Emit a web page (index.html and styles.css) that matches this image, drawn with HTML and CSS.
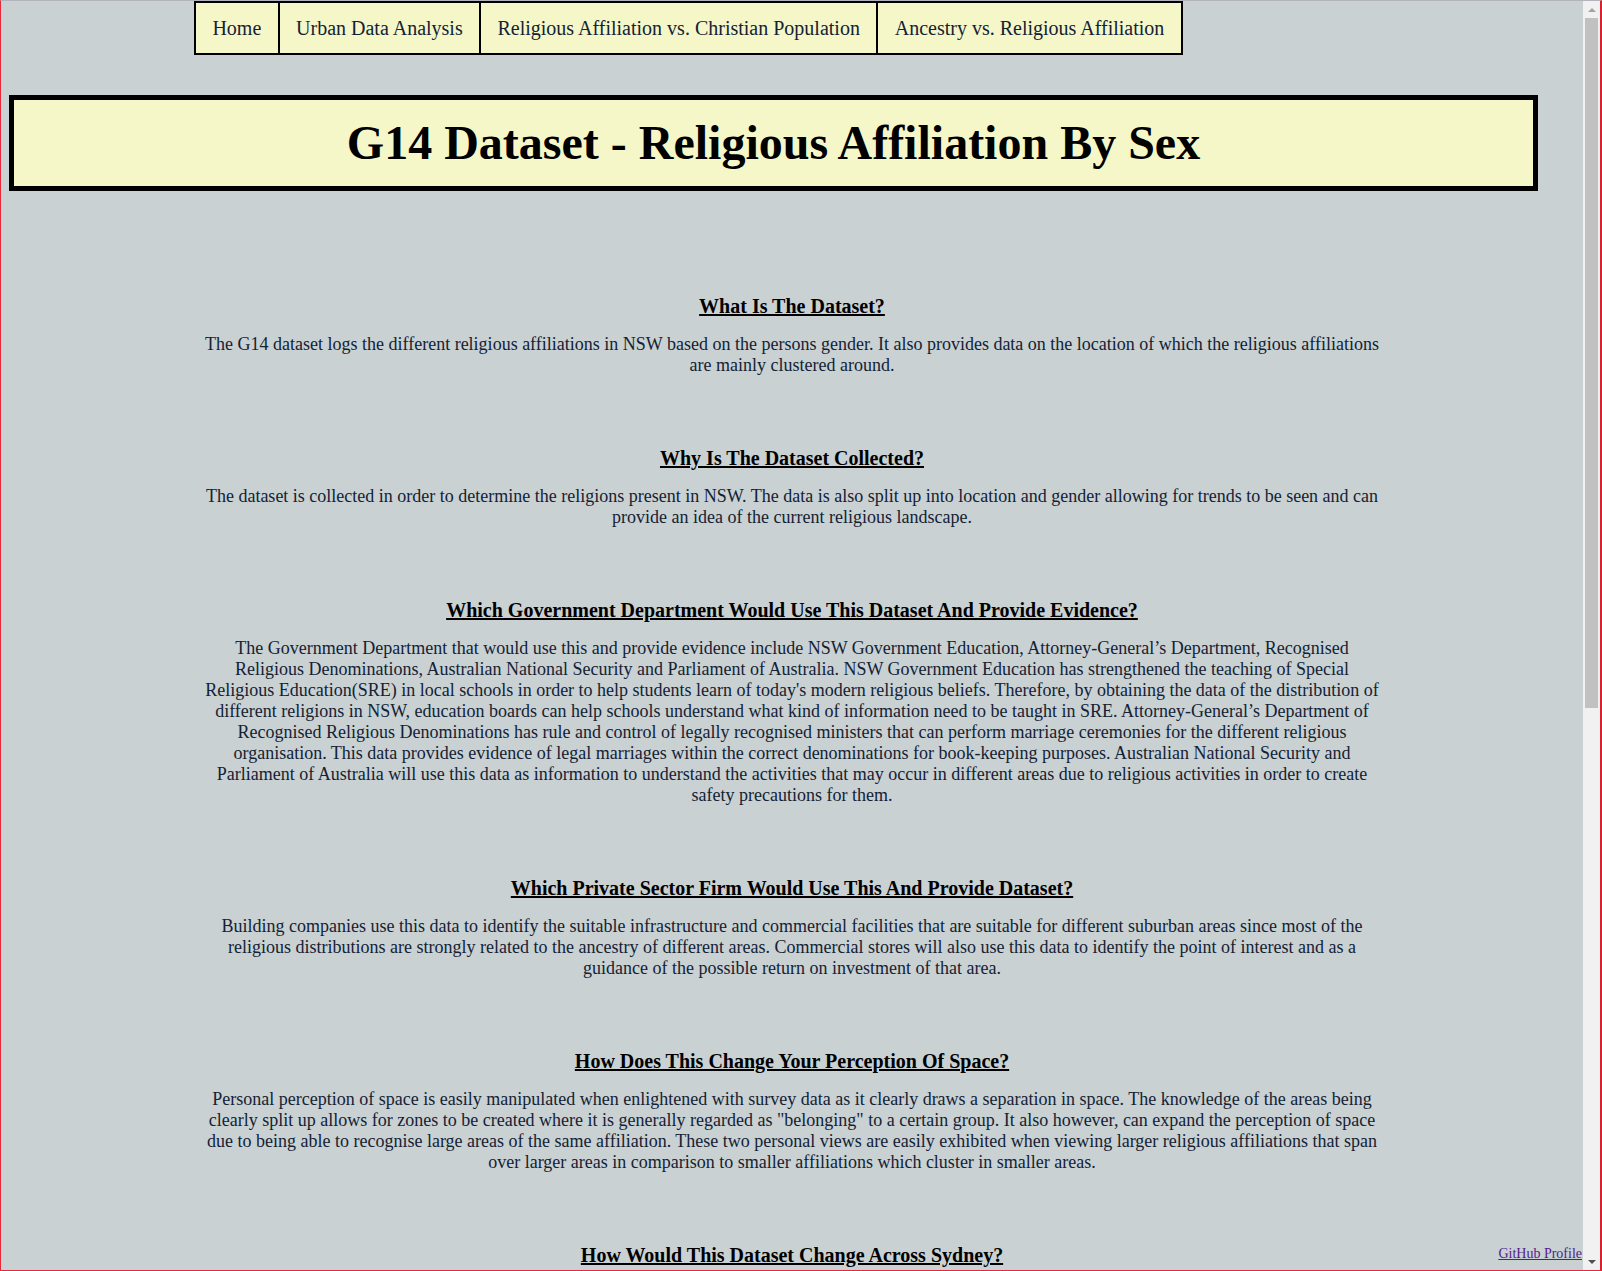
FILE: index.html
```html
<!DOCTYPE html>
<html lang="en">
<head>
<meta charset="utf-8">
<title>G14 Dataset - Religious Affiliation By Sex</title>
<link rel="stylesheet" href="styles.css">
</head>
<body>
<div class="window">
  <div class="viewport">
    <div class="page">
      <nav class="nav">
        <a class="nav-item" href="#">Home</a>
        <a class="nav-item" href="#">Urban Data Analysis</a>
        <a class="nav-item" href="#">Religious Affiliation vs. Christian Population</a>
        <a class="nav-item" href="#">Ancestry vs. Religious Affiliation</a>
      </nav>
      <h1 class="title">G14 Dataset - Religious Affiliation By Sex</h1>
      <main class="content">
        <section class="section">
          <h3 class="heading">What Is The Dataset?</h3>
          <p class="text">The G14 dataset logs the different religious affiliations in NSW based on the persons gender. It also provides data on the location of which the religious affiliations are mainly clustered around.</p>
        </section>
        <section class="section">
          <h3 class="heading">Why Is The Dataset Collected?</h3>
          <p class="text">The dataset is collected in order to determine the religions present in NSW. The data is also split up into location and gender allowing for trends to be seen and can provide an idea of the current religious landscape.</p>
        </section>
        <section class="section">
          <h3 class="heading">Which Government Department Would Use This Dataset And Provide Evidence?</h3>
          <p class="text">The Government Department that would use this and provide evidence include NSW Government Education, Attorney-General’s Department, Recognised Religious Denominations, Australian National Security and Parliament of Australia. NSW Government Education has strengthened the teaching of Special Religious Education(SRE) in local schools in order to help students learn of today's modern religious beliefs. Therefore, by obtaining the data of the distribution of different religions in NSW, education boards can help schools understand what kind of information need to be taught in SRE. Attorney-General’s Department of Recognised Religious Denominations has rule and control of legally recognised ministers that can perform marriage ceremonies for the different religious organisation. This data provides evidence of legal marriages within the correct denominations for book-keeping purposes. Australian National Security and Parliament of Australia will use this data as information to understand the activities that may occur in different areas due to religious activities in order to create safety precautions for them.</p>
        </section>
        <section class="section">
          <h3 class="heading">Which Private Sector Firm Would Use This And Provide Dataset?</h3>
          <p class="text">Building companies use this data to identify the suitable infrastructure and commercial facilities that are suitable for different suburban areas since most of the religious distributions are strongly related to the ancestry of different areas. Commercial stores will also use this data to identify the point of interest and as a guidance of the possible return on investment of that area.</p>
        </section>
        <section class="section">
          <h3 class="heading">How Does This Change Your Perception Of Space?</h3>
          <p class="text">Personal perception of space is easily manipulated when enlightened with survey data as it clearly draws a separation in space. The knowledge of the areas being clearly split up allows for zones to be created where it is generally regarded as "belonging" to a certain group. It also however, can expand the perception of space due to being able to recognise large areas of the same affiliation. These two personal views are easily exhibited when viewing larger religious affiliations that span over larger areas in comparison to smaller affiliations which cluster in smaller areas.</p>
        </section>
        <section class="section">
          <h3 class="heading">How Would This Dataset Change Across Sydney?</h3>
          <p class="text">As Sydney continues to grow, the distribution of religious affiliations across its suburbs will continue to shift.</p>
        </section>
      </main>
      <a class="github" href="#">GitHub Profile</a>
    </div>
    <div class="scrollbar">
      <div class="sb-btn"><span class="arrow-up"></span></div>
      <div class="sb-track"><div class="sb-thumb"></div></div>
      <div class="sb-btn sb-btn-bottom"><span class="arrow-down"></span></div>
    </div>
  </div>
</div>
</body>
</html>
```

FILE: styles.css
```css
html, body {
  margin: 0;
  padding: 0;
  overflow: hidden;
}

.window {
  box-sizing: border-box;
  width: 1602px;
  height: 1271px;
  border-top: 1px solid #b3b3bb;
  border-left: 1px solid #e8283a;
  border-right: 2px solid #d8202e;
  border-bottom: 1px solid #e8283a;
  display: flex;
  flex-direction: column;
}

.viewport {
  flex: 1;
  display: flex;
  flex-direction: row;
  min-height: 0;
}

.page {
  flex: 1;
  position: relative;
  overflow: hidden;
  background: #c9d1d3;
  padding: 0 8px;
  font-family: "Liberation Serif", "Times New Roman", serif;
  color: #142233;
}

.nav {
  display: flex;
  margin: 0 0 0 185px;
  width: max-content;
  border: 2px solid #000;
  background: #f5f7c9;
}

.nav-item {
  display: block;
  padding: 13px 16.4px;
  font-size: 20px;
  line-height: 24px;
  color: #142233;
  text-decoration: none;
  border-left: 2px solid #000;
}

.nav-item:first-child {
  border-left: none;
}

.title {
  margin: 40px 37px 0 0;
  border: 5px solid #000;
  background: #f5f7c9;
  padding: 15px 0;
  text-align: center;
  font-size: 48px;
  line-height: 56px;
  font-weight: bold;
  color: #000;
}

.content {
  width: 75%;
  margin: 104px auto 0;
  display: flex;
  flex-direction: column;
  gap: 71px;
  text-align: center;
}

.section {
  display: flex;
  flex-direction: column;
}

.heading {
  margin: 0 0 16px;
  font-size: 20px;
  line-height: 23px;
  font-weight: bold;
  text-decoration: underline;
  color: #000;
}

.text {
  margin: 0;
  font-size: 18px;
  line-height: 21px;
}

.github {
  position: absolute;
  right: 1px;
  bottom: 8px;
  font-size: 14px;
  line-height: 16px;
  color: #551a8b;
  text-decoration: underline;
}

.scrollbar {
  width: 17px;
  background: #f1f1f1;
  display: flex;
  flex-direction: column;
}

.sb-btn {
  height: 17px;
  display: flex;
  align-items: center;
  justify-content: center;
}

.sb-track {
  flex: 1;
  padding: 0 2px;
}

.sb-thumb {
  height: 690px;
  background: #c1c1c1;
}

.arrow-up {
  width: 0;
  height: 0;
  border-left: 4px solid transparent;
  border-right: 4px solid transparent;
  border-bottom: 4px solid #a3a3a3;
}

.arrow-down {
  width: 0;
  height: 0;
  border-left: 4px solid transparent;
  border-right: 4px solid transparent;
  border-top: 4px solid #505050;
}
```
